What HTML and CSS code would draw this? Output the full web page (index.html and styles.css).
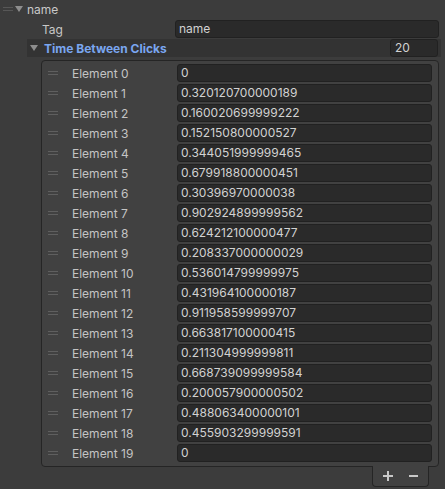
FILE: index.html
```html
<!DOCTYPE html>
<html>
<head>
<meta charset="utf-8">
<link rel="stylesheet" href="styles.css">
</head>
<body>
<div class="inspector">
  <div class="row top">
    <span class="handle h-top"></span>
    <span class="tri tri-top"></span>
    <span class="label">name</span>
  </div>
  <div class="row prop">
    <span class="label tag">Tag</span>
    <div class="field tagfield">name</div>
  </div>
  <div class="row header">
    <span class="tri tri-head"></span>
    <span class="title">Time Between Clicks</span>
    <div class="field size">20</div>
  </div>
  <div class="list">
    <div class="elem"><span class="handle"></span><span class="elabel">Element 0</span><div class="field">0</div></div>
    <div class="elem"><span class="handle"></span><span class="elabel">Element 1</span><div class="field">0.320120700000189</div></div>
    <div class="elem"><span class="handle"></span><span class="elabel">Element 2</span><div class="field">0.160020699999222</div></div>
    <div class="elem"><span class="handle"></span><span class="elabel">Element 3</span><div class="field">0.152150800000527</div></div>
    <div class="elem"><span class="handle"></span><span class="elabel">Element 4</span><div class="field">0.344051999999465</div></div>
    <div class="elem"><span class="handle"></span><span class="elabel">Element 5</span><div class="field">0.679918800000451</div></div>
    <div class="elem"><span class="handle"></span><span class="elabel">Element 6</span><div class="field">0.30396970000038</div></div>
    <div class="elem"><span class="handle"></span><span class="elabel">Element 7</span><div class="field">0.902924899999562</div></div>
    <div class="elem"><span class="handle"></span><span class="elabel">Element 8</span><div class="field">0.624212100000477</div></div>
    <div class="elem"><span class="handle"></span><span class="elabel">Element 9</span><div class="field">0.208337000000029</div></div>
    <div class="elem"><span class="handle"></span><span class="elabel">Element 10</span><div class="field">0.536014799999975</div></div>
    <div class="elem"><span class="handle"></span><span class="elabel">Element 11</span><div class="field">0.431964100000187</div></div>
    <div class="elem"><span class="handle"></span><span class="elabel">Element 12</span><div class="field">0.911958599999707</div></div>
    <div class="elem"><span class="handle"></span><span class="elabel">Element 13</span><div class="field">0.663817100000415</div></div>
    <div class="elem"><span class="handle"></span><span class="elabel">Element 14</span><div class="field">0.211304999999811</div></div>
    <div class="elem"><span class="handle"></span><span class="elabel">Element 15</span><div class="field">0.668739099999584</div></div>
    <div class="elem"><span class="handle"></span><span class="elabel">Element 16</span><div class="field">0.200057900000502</div></div>
    <div class="elem"><span class="handle"></span><span class="elabel">Element 17</span><div class="field">0.488063400000101</div></div>
    <div class="elem"><span class="handle"></span><span class="elabel">Element 18</span><div class="field">0.455903299999591</div></div>
    <div class="elem"><span class="handle"></span><span class="elabel">Element 19</span><div class="field">0</div></div>
  </div>
  <div class="footer">
    <svg class="btn" width="10" height="10" viewBox="0 0 10 10"><rect x="0" y="4" width="10" height="2" fill="#c8c8c8"/><rect x="4" y="0" width="2" height="10" fill="#c8c8c8"/></svg>
    <svg class="btn" width="9" height="10" viewBox="0 0 9 10"><rect x="0" y="4" width="9" height="2" fill="#c8c8c8"/></svg>
  </div>
</div>
</body>
</html>
```
FILE: styles.css
```css
html, body {
  margin: 0;
  padding: 0;
  background: #3c3c3c;
  width: 445px;
  height: 489px;
  overflow: hidden;
}
.inspector {
  width: 441px;
  font-family: Inter, "Noto Sans", sans-serif;
  font-size: 12px;
  color: #c4c4c4;
}
.row {
  display: flex;
  align-items: center;
  height: 18px;
  margin-bottom: 2px;
}
.handle {
  display: block;
  width: 10px;
  height: 4px;
  border-top: 1px solid #5f5f5f;
  border-bottom: 1px solid #5f5f5f;
  box-sizing: border-box;
  flex: none;
}
.h-top {
  width: 10px;
  margin-left: 3px;
  border-color: #575757;
}
.tri {
  width: 0;
  height: 0;
  border-left: 4px solid transparent;
  border-right: 4px solid transparent;
  border-top: 6px solid #8e8e8e;
  flex: none;
}
.tri-top {
  margin-left: 2px;
  margin-right: 4px;
}
.label {
  color: #c8c8c8;
}
.tag {
  margin-left: 42px;
  width: 133px;
}
.field {
  height: 18px;
  box-sizing: border-box;
  background: #2a2a2a;
  border: 1px solid #212121;
  border-radius: 3px;
  padding-left: 3px;
  line-height: 16px;
  color: #d2d2d2;
  white-space: nowrap;
  overflow: hidden;
}
.tagfield {
  width: 264px;
}
.header {
  margin-left: 27px;
  background: #333333;
  height: 18px;
  margin-top: -1px;
  margin-bottom: 3px;
}
.tri-head {
  margin-left: 3px;
  margin-right: 6px;
}
.title {
  font-weight: 700;
  color: #7aa6f0;
  flex: 1;
}
.size {
  width: 48px;
  margin-right: 3px;
  padding-left: 4px;
}
.list {
  margin-left: 41px;
  width: 398px;
  box-sizing: border-box;
  background: #414141;
  border: 1px solid #252525;
  border-radius: 4px;
  padding: 3px 6px 4px 5px;
}
.elem {
  display: flex;
  align-items: center;
  height: 18px;
  margin-bottom: 2px;
}
.elem:last-child {
  margin-bottom: 0;
}
.elem .handle {
  margin-left: 1px;
}
.elabel {
  margin-left: 14px;
  width: 105px;
  flex: none;
}
.elem .field {
  width: 256px;
}
.footer {
  margin-left: 372px;
  margin-top: -1px;
  width: 57px;
  height: 21px;
  box-sizing: border-box;
  background: #414141;
  border: 1px solid #252525;
  border-top: none;
  border-radius: 0 0 4px 4px;
  display: flex;
  align-items: center;
  padding-left: 10px;
  gap: 16px;
  padding-bottom: 1px;
}
.btn {
  display: block;
  flex: none;
}
```
